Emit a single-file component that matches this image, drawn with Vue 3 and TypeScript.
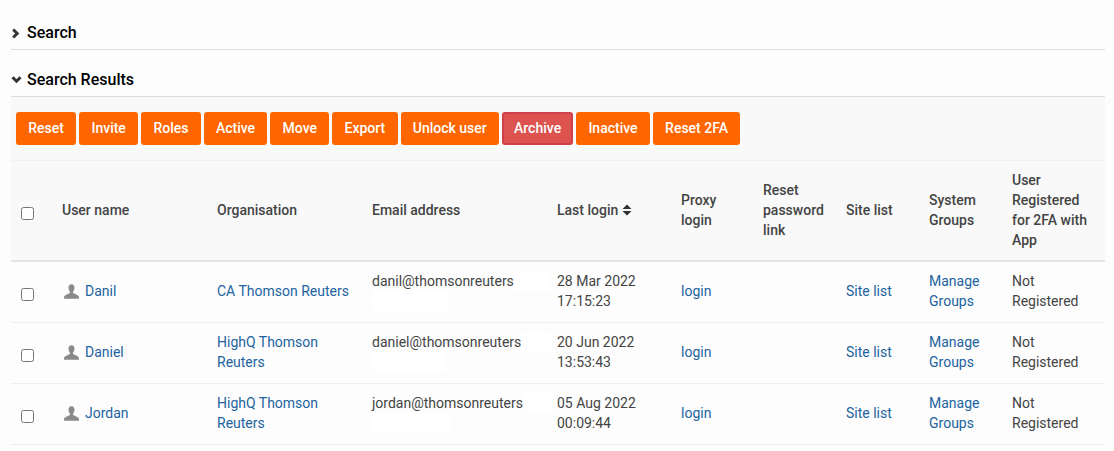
<script setup lang="ts">
interface Row {
  name: string
  org: string
  user: string
  topPatch: number
  bottomPatch: number
  date: string
  time: string
}

const buttons = ['Reset', 'Invite', 'Roles', 'Active', 'Move', 'Export', 'Unlock user', 'Archive', 'Inactive', 'Reset 2FA']

const rows: Row[] = [
  { name: 'Danil', org: 'CA Thomson Reuters', user: 'danil@thomsonreuters', topPatch: 36, bottomPatch: 76, date: '28 Mar 2022', time: '17:15:23' },
  { name: 'Daniel', org: 'HighQ Thomson Reuters', user: 'daniel@thomsonreuters', topPatch: 30, bottomPatch: 74, date: '20 Jun 2022', time: '13:53:43' },
  { name: 'Jordan', org: 'HighQ Thomson Reuters', user: 'jordan@thomsonreuters', topPatch: 30, bottomPatch: 78, date: '05 Aug 2022', time: '00:09:44' },
]
</script>

<template>
  <div class="page">
    <h4 class="section">
      <svg class="chevron" viewBox="0 0 11 11"><path d="M2.2 1.5 L6.2 5.5 L2.2 9.5" /></svg>
      Search
    </h4>
    <h4 class="section results">
      <svg class="chevron" viewBox="0 0 11 11"><path d="M1.5 2.2 L5.5 6.2 L9.5 2.2" /></svg>
      Search Results
    </h4>

    <div class="toolbar">
      <button v-for="b in buttons" :key="b" class="btn" :class="{ danger: b === 'Archive' }">{{ b }}</button>
    </div>

    <table class="users">
      <colgroup>
        <col style="width: 41px" />
        <col style="width: 155px" />
        <col style="width: 155px" />
        <col style="width: 185px" />
        <col style="width: 124px" />
        <col style="width: 82px" />
        <col style="width: 83px" />
        <col style="width: 83px" />
        <col style="width: 83px" />
        <col style="width: 103px" />
      </colgroup>
      <thead>
        <tr>
          <th><input class="head-check" type="checkbox" /></th>
          <th>User name</th>
          <th>Organisation</th>
          <th>Email address</th>
          <th>
            Last login
            <svg class="sort" viewBox="0 0 10 12"><path d="M5 0.5 L9.5 5 H0.5 Z M0.5 7 H9.5 L5 11.5 Z" /></svg>
          </th>
          <th>Proxy login</th>
          <th>Reset password link</th>
          <th>Site list</th>
          <th>System Groups</th>
          <th>User Registered for 2FA with App</th>
        </tr>
      </thead>
      <tbody>
        <tr v-for="r in rows" :key="r.user">
          <td><input type="checkbox" /></td>
          <td>
            <svg class="person" viewBox="0 0 16 16">
              <path d="M8 1.2 C9.9 1.2 10.8 2.6 10.8 4.4 C10.8 6 10.1 7.3 9.5 8.1 C9.2 8.6 9.4 9.3 10 9.6 L13.4 11.2 C14.4 11.7 15 12.4 15 13.4 V14.8 H1 V13.4 C1 12.4 1.6 11.7 2.6 11.2 L6 9.6 C6.6 9.3 6.8 8.6 6.5 8.1 C5.9 7.3 5.2 6 5.2 4.4 C5.2 2.6 6.1 1.2 8 1.2 Z" />
            </svg>
            <a>{{ r.name }}</a>
          </td>
          <td><a>{{ r.org }}</a></td>
          <td class="email">
            <div class="mail-line">{{ r.user }}<span class="patch" :style="{ width: r.topPatch + 'px' }"></span></div>
            <div class="mail-line"><span class="patch" :style="{ width: r.bottomPatch + 'px' }"></span></div>
          </td>
          <td>{{ r.date }}<br />{{ r.time }}</td>
          <td><a>login</a></td>
          <td></td>
          <td><a>Site list</a></td>
          <td><a>Manage Groups</a></td>
          <td>Not Registered</td>
        </tr>
      </tbody>
    </table>
  </div>
</template>

<style scoped>
.page {
  height: 451px;
  box-sizing: border-box;
  padding: 0 9px 0 11px;
  overflow: hidden;
  background: #fdfdfd;
  font-family: Roboto, "Liberation Sans", sans-serif;
  font-size: 14px;
  line-height: 20px;
  color: #3f3f3f;
}

.section {
  display: flex;
  align-items: center;
  gap: 5px;
  height: 26px;
  margin: 0;
  padding-top: 20px;
  padding-bottom: 3px;
  border-bottom: 1px solid #dedede;
  font-size: 16px;
  font-weight: 500;
  color: #000;
}

.results {
  padding-top: 17px;
}

.chevron {
  width: 11px;
  height: 11px;
  fill: none;
  stroke: #333;
  stroke-width: 3;
}

.toolbar {
  display: flex;
  gap: 3px;
  padding: 15px 5px;
  background: #f9f9f9;
  border-bottom: 1px solid #f1f1f1;
}

.btn {
  height: 33px;
  padding: 0 12.25px 2px;
  border: 0;
  border-radius: 3px;
  background: #ff6600;
  color: #fff;
  font: 500 14px/20px Roboto, "Liberation Sans", sans-serif;
}

.danger {
  border: 2px solid #d0404a;
  padding: 0 10px 2px;
  background: #dc5350;
}

.users {
  width: 1094px;
  table-layout: fixed;
  border-collapse: collapse;
}

th {
  height: 100px;
  padding: 0 10px 1px;
  background: #f9f9f9;
  border-bottom: 2px solid #e4e4e4;
  text-align: left;
  font-weight: 500;
  box-sizing: border-box;
  color: #444;
}

td {
  height: 61px;
  padding: 0 10px 2px;
  border-bottom: 1px solid #efefef;
  box-sizing: border-box;
  color: #444;
}

input {
  display: block;
  width: 13px;
  height: 13px;
  margin: 8px 0 0;
}

.head-check {
  margin-top: 6px;
}

a {
  color: #22639f;
}

.person {
  width: 17px;
  height: 17px;
  margin: 0 5px 0 1px;
  vertical-align: -4px;
  fill: #8a8a8a;
}

.sort {
  width: 10px;
  height: 12px;
  vertical-align: -1px;
  fill: #333;
}

.mail-line {
  height: 20px;
  white-space: nowrap;
}

.patch {
  display: inline-block;
  height: 20px;
  vertical-align: top;
  background: #fff;
}
</style>
